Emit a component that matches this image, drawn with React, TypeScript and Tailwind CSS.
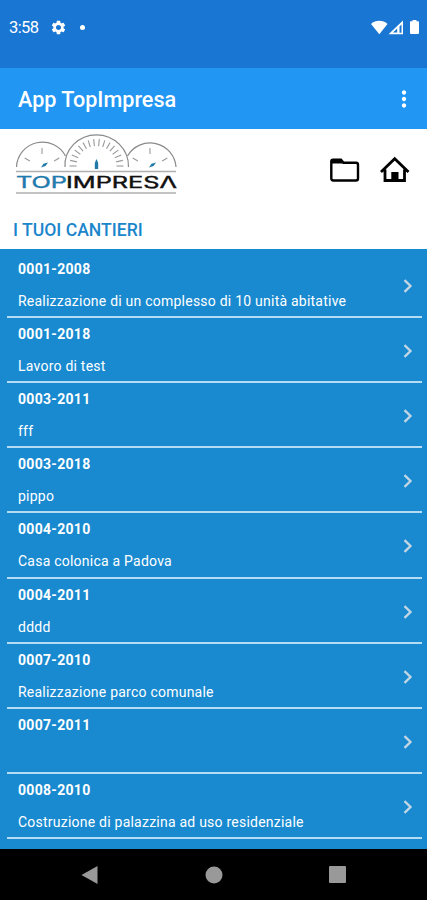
import { MdSettings, MdMoreVert } from "react-icons/md";

interface Cantiere {
  codice: string;
  descrizione: string;
}

const cantieri: Cantiere[] = [
  {
    codice: "0001-2008",
    descrizione: "Realizzazione di un complesso di 10 unità abitative",
  },
  { codice: "0001-2018", descrizione: "Lavoro di test" },
  { codice: "0003-2011", descrizione: "fff" },
  { codice: "0003-2018", descrizione: "pippo" },
  { codice: "0004-2010", descrizione: "Casa colonica a Padova" },
  { codice: "0004-2011", descrizione: "dddd" },
  { codice: "0007-2010", descrizione: "Realizzazione parco comunale" },
  { codice: "0007-2011", descrizione: "" },
  {
    codice: "0008-2010",
    descrizione: "Costruzione di palazzina ad uso residenziale",
  },
];

// Tacche di un quadrante, angoli in gradi (0 = verticale)
const Ticks = ({
  cx,
  cy,
  r1,
  r2,
  angles,
}: {
  cx: number;
  cy: number;
  r1: number;
  r2: number;
  angles: number[];
}) => (
  <g stroke="#9a9a9a" strokeWidth="1.1">
    {angles.map((a) => (
      <line
        key={a}
        x1={cx}
        x2={cx}
        y1={cy - r1}
        y2={cy - r2}
        transform={`rotate(${a} ${cx} ${cy})`}
      />
    ))}
  </g>
);

const Logo = () => (
  <svg
    width="164"
    height="64"
    viewBox="0 0 164 64"
    role="img"
    aria-label="TOPIMPRESA"
  >
    <g fill="none" stroke="#8a8a8a" strokeWidth="1.2">
      <path d="M1.500 33A26 26 0 0 1 50.500 22" />
      <path d="M50 33C49 15 64 .8 81.500 .8S114 15 113.500 33" />
      <path d="M112.500 22A26 26 0 0 1 161 33" />
    </g>
    <Ticks cx={27} cy={34} r1={14} r2={20} angles={[-60, 0, 60]} />
    <Ticks cx={135} cy={34} r1={14} r2={20} angles={[-60, 0, 60]} />
    <Ticks
      cx={81.5}
      cy={32}
      r1={20}
      r2={27}
      angles={[-90, -78, -66, -54, -42, -30, -18, -6, 6, 18, 30, 42, 54, 66, 78, 90]}
    />
    <g fill="#1f7aa8">
      <path d="M26 33.500L28.500 29.800L33 28.500L30.500 32Z" />
      <path d="M134 33.500L136.500 29.800L141 28.500L138.500 32Z" />
      <path d="M79.800 35V29L81.500 25L83.200 29V35Z" />
    </g>
    <path d="M1 37.500H161M1 59H161" stroke="#b0b0b0" strokeWidth="1.600" />
    <text
      x="1"
      y="54"
      fontSize="16.500"
      fontFamily="Inter, sans-serif"
      fill="#1f7aad"
      stroke="#1f7aad"
      strokeWidth=".4"
      textLength="51"
      lengthAdjust="spacingAndGlyphs"
    >
      TOP
    </text>
    <text
      x="51"
      y="54"
      fontSize="16.500"
      fontFamily="Inter, sans-serif"
      fill="#111"
      stroke="#111"
      strokeWidth=".4"
      textLength="111"
      lengthAdjust="spacingAndGlyphs"
    >
      IMPRESΛ
    </text>
  </svg>
);

const StatusBar = () => (
  <div className="flex h-[68px] items-start justify-between bg-[#1976d2] pt-[18px] pr-[7px] pl-[9px] text-white">
    <div className="flex h-5 items-center">
      <span className="w-[30px] pt-px text-[16.500px] tracking-[-0.6px] whitespace-nowrap">
        3:58
      </span>
      <MdSettings className="mb-[2px] ml-[11px] h-[17px] w-[17px]" />
      <span className="mb-[2px] ml-[13px] h-[5px] w-[5px] rounded-full bg-white" />
    </div>
    <svg width="49" height="16" viewBox="0 0 49 16" className="mt-[2px]" fill="#fff">
      <path d="M0 4C4.500 -.4 12 -.4 16.500 4L8.300 14.200Z" />
      <path
        d="M17.500 14.200L32 .5V14.200ZM26.200 8.400L22 12.500H26.200ZM28.500 6.400V12.700H30.500V4.500Z"
        fillRule="evenodd"
      />
      <path d="M41.500 0H45.500V1.300H47.500Q48 1.300 48 2V13Q48 14 47 14H40Q39 14 39 13V2Q39 1.300 39.500 1.300H41.500Z" />
    </svg>
  </div>
);

const NavigationBar = () => (
  <div className="flex h-[51px] items-center justify-between bg-black pr-[81.500px] pl-[81px] text-[#999]">
    <svg width="17" height="20" viewBox="0 0 17 20" fill="currentColor">
      <path d="M.5 10L16.500 1V19Z" />
    </svg>
    <svg
      width="18"
      height="18"
      viewBox="0 0 18 18"
      className="ml-px"
      fill="currentColor"
    >
      <circle cx="9" cy="9" r="8.500" />
    </svg>
    <div className="h-[17px] w-[17px] rounded-[1px] bg-[#999]" />
  </div>
);

const App = () => {
  return (
    <div className="flex h-[900px] w-[427px] flex-col overflow-hidden bg-white font-[Roboto,sans-serif]">
      <StatusBar />

      <header className="flex h-[61px] items-center justify-between bg-[#2196f3] pr-[10px] pl-[18px] text-white">
        <h1 className="pt-1 text-[21.600px] font-medium">App TopImpresa</h1>
        <MdMoreVert className="h-[26px] w-[26px]" />
      </header>

      <div className="flex h-[80px] items-start justify-between pt-[5px] pr-[17px] pl-[15px]">
        <Logo />
        <div className="flex gap-5 pt-[22px]">
          <svg width="30" height="28" viewBox="0 0 30 28" fill="none">
            <path
              d="M1.300 5.500Q1.300 3.800 3 3.800H11L13.500 6.800H26Q28 6.800 28 8.800V22.500Q28 24.500 26 24.500H3.300Q1.300 24.500 1.300 22.500Z"
              stroke="#000"
              strokeWidth="2.400"
            />
            <path d="M2 4H11L13.500 7.500H2Z" fill="#000" />
          </svg>
          <svg width="30" height="28" viewBox="0 0 30 28" fill="none">
            <path
              d="M1 16L14.700 2.800L28.500 16M5 13.500V24.500H24.500V13.500"
              stroke="#000"
              strokeWidth="2.800"
            />
            <path d="M11.300 16H18.500V24.500H11.300Z" fill="#000" />
          </svg>
        </div>
      </div>

      <h2 className="flex h-[40px] items-center pt-[3px] pl-[13px] text-[17.600px] font-medium text-[#1b86cc]">
        I TUOI CANTIERI
      </h2>

      <main className="flex-1 overflow-hidden bg-[#198ad0] pt-[4px] pr-[5px] pl-[7px]">
        {cantieri.map((c) => (
          <div
            key={c.codice}
            className="flex h-[65.120px] items-center justify-between border-b-2 border-[#b5dcf5] pr-[9px] pl-[11px] text-white"
          >
            <div className="flex h-full flex-col pt-[6px] text-sm leading-5">
              <span className="font-bold tracking-[0.300px]">{c.codice}</span>
              <span className="mt-3 tracking-[0.230px] whitespace-nowrap">
                {c.descrizione}
              </span>
            </div>
            <svg
              width="10"
              height="14"
              viewBox="0 0 10 14"
              className="mt-[3px]"
              fill="none"
            >
              <path d="M1.500 1.200L7.500 7L1.500 12.800" stroke="#c3d6e4" strokeWidth="2.300" />
            </svg>
          </div>
        ))}
      </main>

      <NavigationBar />
    </div>
  );
};

export default App;
